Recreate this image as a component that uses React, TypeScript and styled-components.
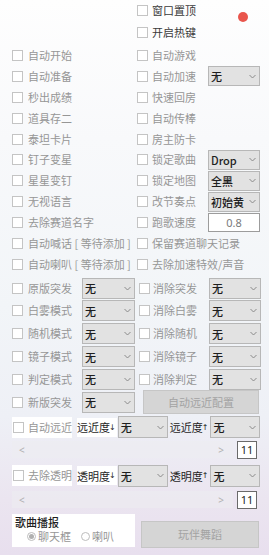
import React from 'react';
import styled, { createGlobalStyle } from 'styled-components';

const Global = createGlobalStyle`
  html, body { margin: 0; padding: 0; }
  body {
    width: 269px;
    height: 555px;
    overflow: hidden;
    font-family: "Noto Sans CJK SC", "Noto Sans", sans-serif;
  }
`;

const Page = styled.div`
  position: relative;
  width: 269px;
  height: 555px;
  box-sizing: border-box;
  padding: 0 9px 0 12px;
  display: flex;
  flex-direction: column;
  background: linear-gradient(180deg, #fefefe 0%, #f8f9fb 25%, #f2f5f8 55%, #eef0f6 75%, #ebe5f0 90%, #e8dfee 100%);
`;

const StatusDot = styled.span`
  position: absolute;
  left: 238px;
  top: 12px;
  width: 10px;
  height: 10px;
  border-radius: 50%;
  background: #e9554c;
`;

const Header = styled.div`
  display: flex;
  flex-direction: column;
  gap: 1px;
  padding-left: 125px;
  height: 45px;
`;

const HeaderRow = styled.div`
  height: 21px;
  display: flex;
  align-items: center;
`;

const TopGrid = styled.div`
  display: grid;
  grid-template-columns: 125px 123px;
  grid-auto-rows: 20.9px;
  align-items: center;
`;

const ModeGrid = styled.div`
  display: grid;
  grid-template-columns: 123px 122px;
  column-gap: 4px;
  grid-auto-rows: 22.8px;
  align-items: center;
  margin-top: 2px;
`;

const Cell = styled.div`
  display: flex;
  align-items: center;
  justify-content: space-between;
  height: 100%;
  min-width: 0;
`;

const CheckItem = styled.label`
  display: flex;
  align-items: center;
  white-space: nowrap;
`;

const Box = styled.span<{ $gap?: number }>`
  flex: none;
  width: 11px;
  height: 11px;
  box-sizing: border-box;
  border: 1px solid #c4c4c4;
  background: #fff;
  margin-right: ${(p) => p.$gap ?? 4}px;
`;

const Text = styled.span<{ $dark?: boolean }>`
  font-size: 11px;
  line-height: 1;
  color: ${(p) => (p.$dark ? '#3a3a3a' : '#969696')};
`;

const SelectBox = styled.div<{ $w: number; $h: number }>`
  flex: none;
  width: ${(p) => p.$w}px;
  height: ${(p) => p.$h}px;
  box-sizing: border-box;
  border: 1px solid #b7b7b7;
  background: #e2e2e2;
  display: flex;
  align-items: center;
  justify-content: space-between;
  padding: 0 3px 0 2px;
  font-size: 11px;
  font-weight: 500;
  color: #1e1e1e;
  white-space: nowrap;
`;

const InputBox = styled.div`
  flex: none;
  width: 52px;
  height: 19px;
  box-sizing: border-box;
  border: 1px solid #9c9c9c;
  background: #fff;
  display: flex;
  align-items: center;
  justify-content: center;
  font-size: 11px;
  color: #7a7a7a;
  font-family: "Noto Sans", sans-serif;
`;

const Chevron = () => (
  <svg width="7" height="5" viewBox="0 0 7 5">
    <path d="M0.5 1 L3.5 4 L6.5 1" fill="none" stroke="#8a8a8a" strokeWidth="1" />
  </svg>
);

const Select = ({ value, w = 52, h = 20 }: { value: string; w?: number; h?: number }) => (
  <SelectBox $w={w} $h={h}>
    <span>{value}</span>
    <Chevron />
  </SelectBox>
);

const Check = ({ label, gap, dark }: { label: string; gap?: number; dark?: boolean }) => (
  <CheckItem>
    <Box $gap={gap} />
    <Text $dark={dark}>{label}</Text>
  </CheckItem>
);

const GreyButton = styled.div<{ $w: number; $h: number }>`
  width: ${(p) => p.$w}px;
  height: ${(p) => p.$h}px;
  box-sizing: border-box;
  border: 1px solid #c6c6c6;
  background: #d5d5d5;
  color: #a3a3a3;
  font-size: 11px;
  display: flex;
  align-items: center;
  justify-content: center;
`;

const ButtonCell = styled.div`
  display: flex;
  justify-content: flex-end;
  padding-right: 2px;
  align-items: center;
  height: 100%;
`;

const ControlRow = styled.div<{ $mt: number; $h: number }>`
  display: flex;
  align-items: center;
  margin-top: ${(p) => p.$mt}px;
  height: ${(p) => p.$h}px;
`;

const WhitePanel = styled.div`
  display: flex;
  align-items: center;
  width: 60px;
  height: 21px;
  box-sizing: border-box;
  padding-left: 1px;
  background: #fff;
  margin-right: 5px;
`;

const Tag = styled.div<{ $white?: boolean; $ml?: number }>`
  flex: none;
  height: 19px;
  display: flex;
  align-items: center;
  font-size: 11px;
  color: #1e1e1e;
  white-space: nowrap;
  background: ${(p) => (p.$white ? '#fff' : 'transparent')};
  margin: 0 1px 0 ${(p) => p.$ml ?? 0}px;
`;

const Arrow = styled.span`
  font-family: "DejaVu Sans", sans-serif;
  font-size: 8px;
  margin-left: -1px;
  margin-right: 1px;
`;

const ScrollRow = styled.div<{ $mt: number }>`
  display: flex;
  align-items: center;
  margin-top: ${(p) => p.$mt}px;
  height: 18px;
`;

const Track = styled.div`
  width: 221px;
  height: 17px;
  background: rgba(236, 236, 240, 0.55);
  display: flex;
  align-items: center;
  justify-content: space-between;
  padding: 0 9px 0 7px;
  box-sizing: border-box;
  color: #b0b0b0;
  font-size: 10px;
  font-family: "Noto Sans", sans-serif;
`;

const NumBox = styled.div`
  margin-left: 4px;
  width: 20px;
  height: 18px;
  box-sizing: border-box;
  border: 1px solid #6a6a6a;
  background: #fff;
  font-size: 11px;
  color: #1e1e1e;
  display: flex;
  align-items: center;
  justify-content: center;
  font-family: "Noto Sans", sans-serif;
`;

const Bottom = styled.div`
  display: flex;
  align-items: flex-start;
  margin-top: 5px;
`;

const Group = styled.div`
  width: 123px;
  height: 33px;
  background: #fff;
  box-sizing: border-box;
  padding: 2px 0 0 3px;
  margin-right: 6px;
`;

const GroupTitle = styled.div`
  font-size: 11px;
  line-height: 13px;
  font-weight: 500;
  color: #1e1e1e;
`;

const Radios = styled.div`
  display: flex;
  align-items: center;
  gap: 10px;
  padding-left: 12px;
  margin-top: 2px;
`;

const RadioItem = styled.span`
  display: flex;
  align-items: center;
  gap: 2px;
`;

const RadioDot = styled.span<{ $on?: boolean }>`
  width: 9px;
  height: 9px;
  border-radius: 50%;
  box-sizing: border-box;
  border: 1px solid #bdbdbd;
  background: #fff;
  display: flex;
  align-items: center;
  justify-content: center;
  &::after {
    content: '';
    width: 5px;
    height: 5px;
    border-radius: 50%;
    background: ${(p) => (p.$on ? '#b0b0b0' : 'transparent')};
  }
`;

const Radio = ({ label, on }: { label: string; on?: boolean }) => (
  <RadioItem>
    <RadioDot $on={on} />
    <Text>{label}</Text>
  </RadioItem>
);

const BottomButtonWrap = styled.div`
  margin-top: 7px;
`;

type TopRow = [string | null, string, React.ReactNode?];

const topRows: TopRow[] = [
  ['自动开始', '自动游戏'],
  ['自动准备', '自动加速', <Select value="无" />],
  ['秒出成绩', '快速回房'],
  ['道具存二', '自动传棒'],
  ['泰坦卡片', '房主防卡'],
  ['钉子变星', '锁定歌曲', <Select value="Drop" />],
  ['星星变钉', '锁定地图', <Select value="全黑" />],
  ['无视语言', '改节奏点', <Select value="初始黄" />],
  ['去除赛道名字', '跑歌速度', <InputBox>0.8</InputBox>],
  ['自动喊话 [ 等待添加 ]', '保留赛道聊天记录'],
  ['自动喇叭 [ 等待添加 ]', '去除加速特效/声音'],
];

const modeRows: [string, string | null][] = [
  ['原版突发', '消除突发'],
  ['白雾模式', '消除白雾'],
  ['随机模式', '消除随机'],
  ['镜子模式', '消除镜子'],
  ['判定模式', '消除判定'],
  ['新版突发', null],
];

export default function App() {
  return (
    <Page>
      <Global />
      <StatusDot />
      <Header>
        <HeaderRow>
          <Check label="窗口置顶" dark />
        </HeaderRow>
        <HeaderRow>
          <Check label="开启热键" dark />
        </HeaderRow>
      </Header>
      <TopGrid>
        {topRows.map(([l, r, ctl], i) => (
          <React.Fragment key={i}>
            <Cell>{l && <Check label={l} gap={5} />}</Cell>
            <Cell>
              <Check label={r} />
              {ctl}
            </Cell>
          </React.Fragment>
        ))}
      </TopGrid>
      <ModeGrid>
        {modeRows.map(([l, r], i) => (
          <React.Fragment key={i}>
            <Cell>
              <Check label={l} gap={5} />
              <Select value="无" w={53} h={21} />
            </Cell>
            {r ? (
              <Cell>
                <Check label={r} gap={3} />
                <Select value="无" w={52} h={21} />
              </Cell>
            ) : (
              <ButtonCell>
                <GreyButton $w={116} $h={24}>自动远近配置</GreyButton>
              </ButtonCell>
            )}
          </React.Fragment>
        ))}
      </ModeGrid>
      <ControlRow $mt={2} $h={23}>
        <WhitePanel>
          <Check label="自动远近" />
        </WhitePanel>
        <Tag $white>远近度<Arrow>↓</Arrow></Tag>
        <Select value="无" w={50} h={22} />
        <Tag $ml={2}>远近度<Arrow>↑</Arrow></Tag>
        <Select value="无" w={50} h={22} />
      </ControlRow>
      <ScrollRow $mt={2}>
        <Track>
          <span>&lt;</span>
          <span>&gt;</span>
        </Track>
        <NumBox>11</NumBox>
      </ScrollRow>
      <ControlRow $mt={6} $h={22}>
        <WhitePanel>
          <Check label="去除透明" />
        </WhitePanel>
        <Tag $white>透明度<Arrow>↓</Arrow></Tag>
        <Select value="无" w={50} h={22} />
        <Tag $ml={2}>透明度<Arrow>↑</Arrow></Tag>
        <Select value="无" w={50} h={22} />
      </ControlRow>
      <ScrollRow $mt={4}>
        <Track>
          <span>&lt;</span>
          <span>&gt;</span>
        </Track>
        <NumBox>11</NumBox>
      </ScrollRow>
      <Bottom>
        <Group>
          <GroupTitle>歌曲播报</GroupTitle>
          <Radios>
            <Radio label="聊天框" on />
            <Radio label="喇叭" />
          </Radios>
        </Group>
        <BottomButtonWrap>
          <GreyButton $w={118} $h={27}>玩伴舞蹈</GreyButton>
        </BottomButtonWrap>
      </Bottom>
    </Page>
  );
}
